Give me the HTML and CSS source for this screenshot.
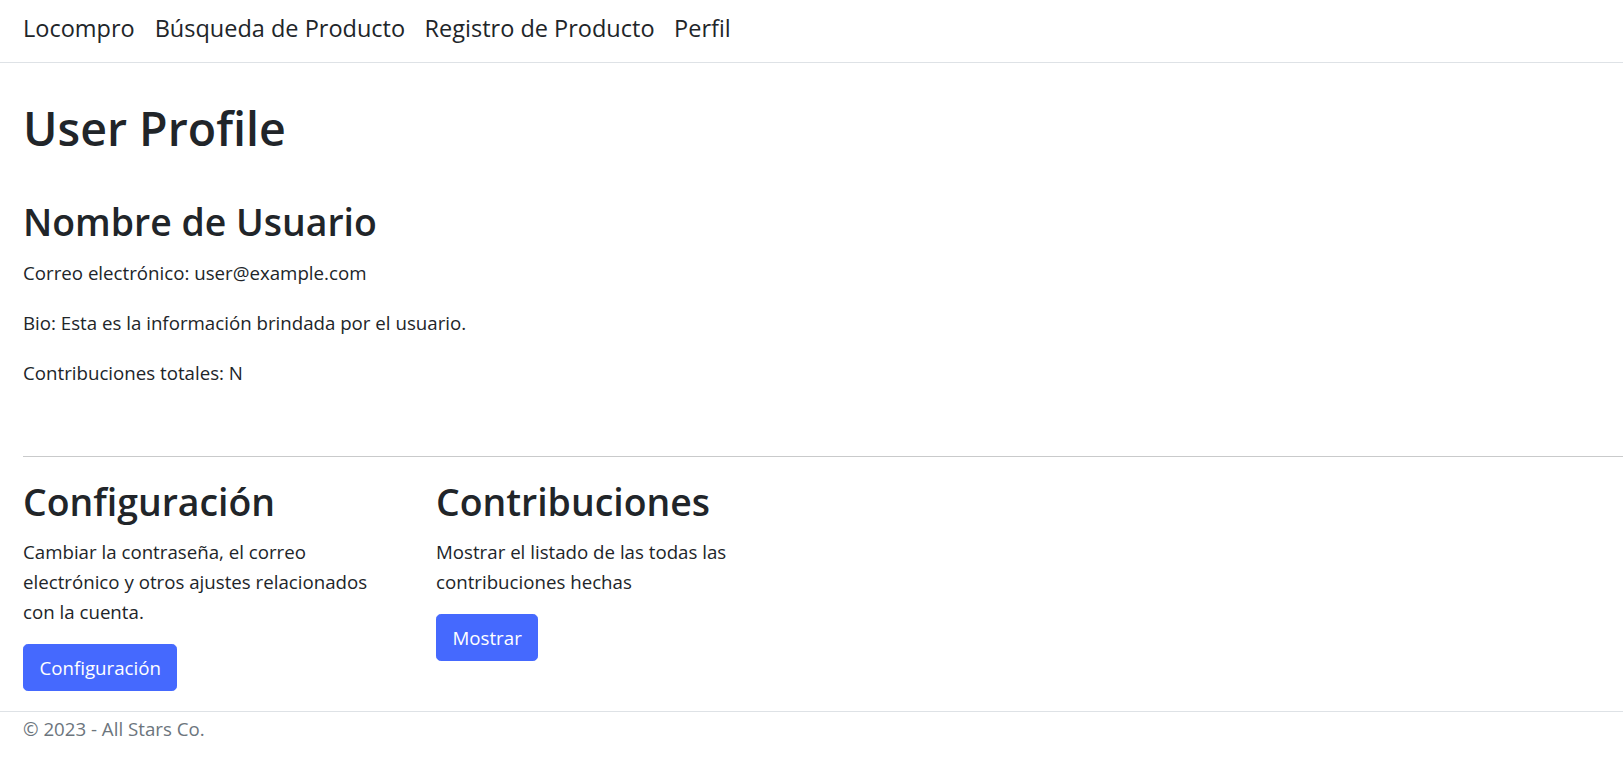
FILE: index.html
```html
<!DOCTYPE html>
<html lang="es">
<head>
<meta charset="utf-8">
<title>User Profile - Locompro</title>
<link rel="stylesheet" href="styles.css">
</head>
<body>
<header>
  <nav class="navbar">
    <a class="navbar-brand" href="#">Locompro</a>
    <ul class="nav-list">
      <li><a class="nav-link" href="#">Búsqueda de Producto</a></li>
      <li><a class="nav-link" href="#">Registro de Producto</a></li>
      <li><a class="nav-link" href="#">Perfil</a></li>
    </ul>
  </nav>
</header>
<main class="page">
  <h1 class="page-title">User Profile</h1>
  <section class="profile-info">
    <h2 class="user-name">Nombre de Usuario</h2>
    <p>Correo electrónico: user@example.com</p>
    <p>Bio: Esta es la información brindada por el usuario.</p>
    <p>Contribuciones totales: N</p>
  </section>
  <hr class="divider">
  <div class="cards">
    <section class="card">
      <h2 class="card-title">Configuración</h2>
      <p class="card-text">Cambiar la contraseña, el correo electrónico y otros ajustes relacionados con la cuenta.</p>
      <a class="btn" href="#">Configuración</a>
    </section>
    <section class="card">
      <h2 class="card-title">Contribuciones</h2>
      <p class="card-text">Mostrar el listado de las todas las contribuciones hechas</p>
      <a class="btn" href="#">Mostrar</a>
    </section>
  </div>
</main>
<footer class="footer">© 2023 - All Stars Co.</footer>
</body>
</html>
```

FILE: styles.css
```css
html, body {
  margin: 0;
  padding: 0;
  background: #ffffff;
}

body {
  font-family: "Open Sans", "Noto Sans", sans-serif;
  font-size: 18.7px;
  line-height: 30px;
  color: #212529;
}

a {
  text-decoration: none;
  color: inherit;
}

.navbar {
  display: flex;
  align-items: flex-start;
  gap: 20px;
  height: 63px;
  box-sizing: border-box;
  padding: 11px 0 0 23px;
  border-bottom: 1px solid #dee2e6;
  font-size: 23.5px;
  line-height: 35px;
}

.navbar-brand {
  color: #212529;
}

.nav-list {
  display: flex;
  gap: 19.5px;
  list-style: none;
  margin: 0;
  padding: 0;
}

.nav-link {
  color: #212529;
}

.page {
  padding: 38px 0 0 23px;
}

.page-title {
  font-size: 46.5px;
  line-height: 1.2;
  font-weight: 600;
  margin: 0 0 43px;
}

.user-name {
  font-size: 37.4px;
  line-height: 1.2;
  font-weight: 600;
  margin: 0 0 13.2px;
}

.profile-info p {
  margin: 0 0 20px;
}

.divider {
  border: 0;
  border-top: 1px solid #c9cacb;
  height: 0;
  margin: 67.7px 0 23px;
}

.cards {
  display: grid;
  grid-template-columns: 372px 372px;
  column-gap: 41px;
}

.card {
  display: flex;
  flex-direction: column;
  align-items: flex-start;
}

.card-title {
  font-size: 37.4px;
  line-height: 1.2;
  font-weight: 600;
  margin: 0 0 12.5px;
}

.card-text {
  margin: 0 0 17.5px;
}

.btn {
  display: inline-block;
  padding: 7.5px 15.5px;
  border: 1px solid #4569fe;
  border-radius: 4.8px;
  background: #4569fe;
  color: #ffffff;
  line-height: 30px;
}

.footer {
  margin-top: 20px;
  border-top: 1px solid #dee2e6;
  padding: 1.5px 0 0 23px;
  color: #6c757d;
  white-space: nowrap;
}
```
